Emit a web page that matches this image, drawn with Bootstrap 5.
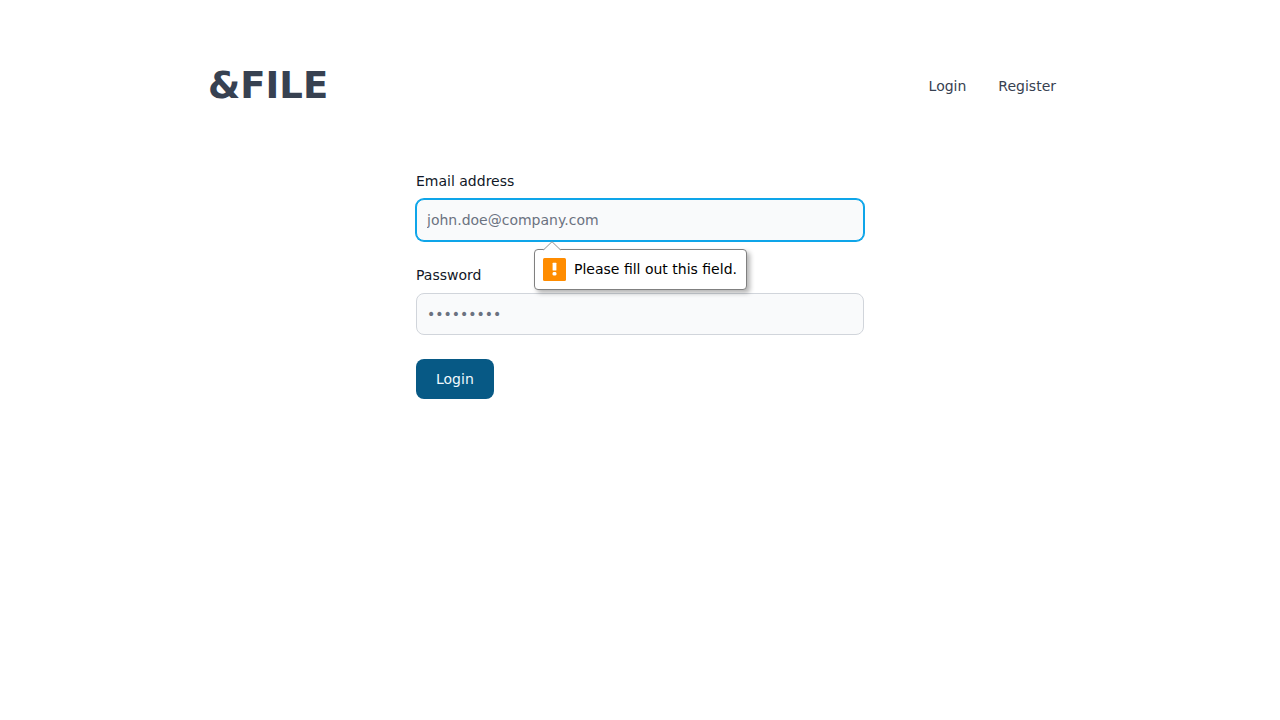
<!DOCTYPE html>
<html lang="en">
<head>
<meta charset="utf-8">
<meta name="viewport" content="width=device-width, initial-scale=1">
<title>&amp;FILE</title>
<link rel="stylesheet" href="https://cdn.jsdelivr.net/npm/bootstrap@5.3.0/dist/css/bootstrap.min.css">
<style>
  body { font-family: "DejaVu Sans", sans-serif; font-size: 14px; line-height: 20px; color: #111827; background: #fff; }
  .site-wrap { max-width: 896px; }
  .site-header { padding-top: 64px; margin-bottom: 64px; }
  .brand { font-size: 37px; line-height: 43px; font-weight: 700; color: #374151; }
  .site-header .nav-link { color: #374151; padding: 8px 16px; }
  .login-form { max-width: 448px; }
  .login-form .form-control {
    font-size: 14px; line-height: 20px; padding: 10px; color: #111827;
    background: #f9fafb; border: 1px solid #d1d5db; border-radius: 8px;
  }
  .login-form .form-control::placeholder { color: #6b7280; }
  .login-form .form-control.active-field,
  .login-form .form-control:focus { border-color: #0ea5e9; box-shadow: 0 0 0 1px #0ea5e9; }
  .btn-login {
    --bs-btn-color: #f0f9ff; --bs-btn-bg: #075985; --bs-btn-hover-color: #fff; --bs-btn-hover-bg: #0c4a6e;
    --bs-btn-border-width: 0; --bs-btn-padding-x: 20px; --bs-btn-padding-y: 10px;
    --bs-btn-font-size: 14px; --bs-btn-line-height: 20px; --bs-btn-border-radius: 8px;
  }
  .hint {
    top: 100%; left: calc(50% - 106px); margin-top: 8px; z-index: 2;
    padding: 8px; width: 213px; height: 41px; line-height: 22px; color: #000; background: #fff;
    border: 1px solid #808080; border-radius: 4px; box-shadow: 3px 3px 5px rgba(0,0,0,.3);
  }
  .hint-arrow { left: 8px; top: -9px; }
</style>
</head>
<body>
<div class="site-wrap container-fluid px-3">
  <header class="site-header d-flex justify-content-between align-items-center">
    <a class="brand text-decoration-none" href="#">&amp;FILE</a>
    <nav class="nav" aria-label="Main">
      <a class="nav-link" href="#">Login</a>
      <a class="nav-link" href="#">Register</a>
    </nav>
  </header>
  <main>
    <form class="login-form mx-auto">
      <div class="mb-4">
        <label class="d-block mb-2" for="email">Email address</label>
        <div class="position-relative">
          <input class="form-control active-field" type="email" id="email" placeholder="john.doe@company.com" aria-describedby="email-hint" required>
          <div class="hint position-absolute d-flex align-items-start gap-2" id="email-hint" role="alert">
            <svg class="hint-arrow position-absolute" width="18" height="10" viewBox="0 0 18 10" aria-hidden="true">
              <path d="M0 10V9L1 8.5 9 .7 17 8.5 18 9V10Z" fill="#fff"/>
              <path d="M.5 8.9 9 .7 17.5 8.9" fill="none" stroke="#909090"/>
            </svg>
            <svg class="flex-shrink-0" width="23" height="23" viewBox="0 0 23 23" aria-hidden="true">
              <rect width="23" height="23" rx="1.5" fill="#ff8c00"/>
              <rect x="9.6" y="4.8" width="3.8" height="7.7" rx=".5" fill="#fff"/>
              <rect x="9.6" y="14" width="3.8" height="3.6" rx="1.3" fill="#fff"/>
            </svg>
            <span class="text-nowrap">Please fill out this field.</span>
          </div>
        </div>
      </div>
      <div class="mb-4">
        <label class="d-block mb-2" for="password">Password</label>
        <input class="form-control" type="password" id="password" placeholder="•••••••••" required>
      </div>
      <button class="btn btn-login" type="submit">Login</button>
    </form>
  </main>
</div>
<script src="https://cdn.jsdelivr.net/npm/bootstrap@5.3.0/dist/js/bootstrap.bundle.min.js"></script>
</body>
</html>
